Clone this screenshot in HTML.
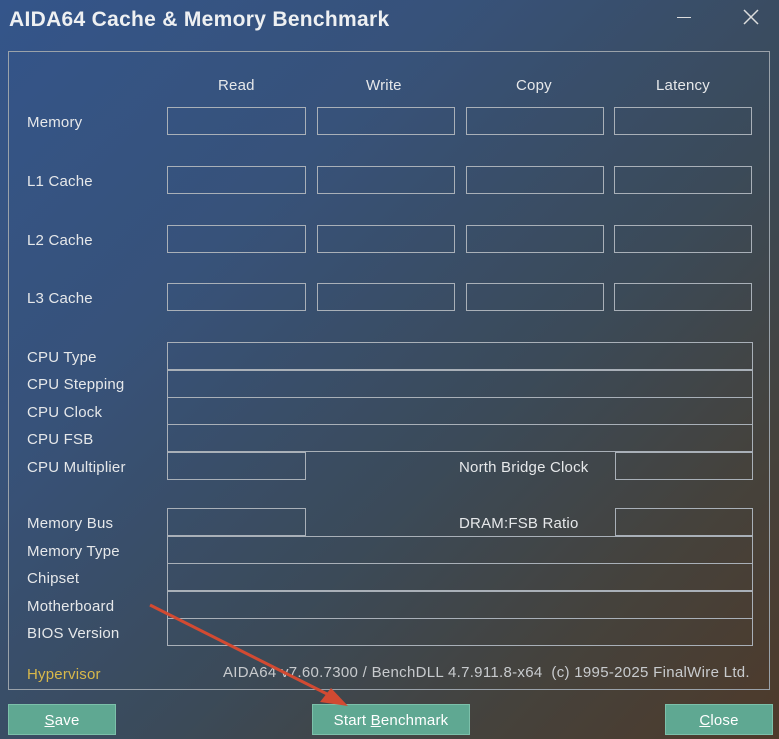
<html><head><style>
body{margin:0;width:779px;height:739px;overflow:hidden;font-family:"Liberation Sans",sans-serif;color:#e6e8ea;
background:linear-gradient(135deg,#34558a 0%,#37527a 30%,#3b4a58 60%,#45423c 80%,#4e3a2a 100%);position:relative}
.a{position:absolute}
.t{font-size:15px;white-space:nowrap;letter-spacing:0.2px;margin-top:1px}
.b{position:absolute;border:1px solid #a9b0b8;box-sizing:border-box;height:28px}
.btn{position:absolute;background:#5fa892;border:1px solid #7cc0aa;box-sizing:border-box;height:31px;top:704px;color:#fff;font-size:15px;text-align:center;line-height:31px;letter-spacing:0.2px}
</style></head><body>
<div class="a" style="left:9px;top:8px;font-size:21px;font-weight:bold;color:#eef0f2;letter-spacing:0.3px">AIDA64 Cache &amp; Memory Benchmark</div>
<div class="a" style="left:677px;top:17px;width:14px;height:1px;background:#ddd"></div>
<svg class="a" style="left:743px;top:9px" width="16" height="16"><path d="M1 1L15 15M15 1L1 15" stroke="#ddd" stroke-width="1.5"/></svg>
<div class="a" style="left:8px;top:51px;width:762px;height:639px;border:1px solid #9aa2aa;box-sizing:border-box"></div>
<div class="a t" style="left:218px;top:76px">Read</div>
<div class="a t" style="left:366px;top:76px">Write</div>
<div class="a t" style="left:516px;top:76px">Copy</div>
<div class="a t" style="left:656px;top:76px">Latency</div>
<div class="a t" style="left:27px;top:113px">Memory</div>
<div class="a t" style="left:27px;top:172px">L1 Cache</div>
<div class="a t" style="left:27px;top:231px">L2 Cache</div>
<div class="a t" style="left:27px;top:289px">L3 Cache</div>
<div class="b" style="left:167px;top:107px;width:139px"></div><div class="b" style="left:317px;top:107px;width:138px"></div><div class="b" style="left:466px;top:107px;width:138px"></div><div class="b" style="left:614px;top:107px;width:138px"></div>
<div class="b" style="left:167px;top:166px;width:139px"></div><div class="b" style="left:317px;top:166px;width:138px"></div><div class="b" style="left:466px;top:166px;width:138px"></div><div class="b" style="left:614px;top:166px;width:138px"></div>
<div class="b" style="left:167px;top:225px;width:139px"></div><div class="b" style="left:317px;top:225px;width:138px"></div><div class="b" style="left:466px;top:225px;width:138px"></div><div class="b" style="left:614px;top:225px;width:138px"></div>
<div class="b" style="left:167px;top:283px;width:139px"></div><div class="b" style="left:317px;top:283px;width:138px"></div><div class="b" style="left:466px;top:283px;width:138px"></div><div class="b" style="left:614px;top:283px;width:138px"></div>
<div class="a t" style="left:27px;top:348px">CPU Type</div>
<div class="a t" style="left:27px;top:375px">CPU Stepping</div>
<div class="a t" style="left:27px;top:403px">CPU Clock</div>
<div class="a t" style="left:27px;top:430px">CPU FSB</div>
<div class="a t" style="left:27px;top:458px">CPU Multiplier</div>
<div class="b" style="left:167px;top:342px;width:586px"></div>
<div class="b" style="left:167px;top:370px;width:586px"></div>
<div class="b" style="left:167px;top:397px;width:586px"></div>
<div class="b" style="left:167px;top:424px;width:586px"></div>
<div class="b" style="left:167px;top:452px;width:139px"></div>
<div class="a t" style="left:459px;top:458px">North Bridge Clock</div>
<div class="b" style="left:615px;top:452px;width:138px"></div>
<div class="a t" style="left:27px;top:514px">Memory Bus</div>
<div class="a t" style="left:27px;top:542px">Memory Type</div>
<div class="a t" style="left:27px;top:569px">Chipset</div>
<div class="a t" style="left:27px;top:597px">Motherboard</div>
<div class="a t" style="left:27px;top:624px">BIOS Version</div>
<div class="b" style="left:167px;top:508px;width:139px"></div>
<div class="a t" style="left:459px;top:514px">DRAM:FSB Ratio</div>
<div class="b" style="left:615px;top:508px;width:138px"></div>
<div class="b" style="left:167px;top:536px;width:586px"></div>
<div class="b" style="left:167px;top:563px;width:586px"></div>
<div class="b" style="left:167px;top:591px;width:586px"></div>
<div class="b" style="left:167px;top:618px;width:586px"></div>
<div class="a t" style="left:27px;top:665px;color:#d8b84a">Hypervisor</div>
<div class="a t" style="left:223px;top:663px;color:#c8cbce;letter-spacing:0.3px">AIDA64 v7.60.7300 / BenchDLL 4.7.911.8-x64&nbsp; (c) 1995-2025 FinalWire Ltd.</div>
<div class="btn" style="left:8px;width:108px"><u>S</u>ave</div>
<div class="btn" style="left:312px;width:158px">Start <u>B</u>enchmark</div>
<div class="btn" style="left:665px;width:108px"><u>C</u>lose</div>
<svg class="a" style="left:0;top:0" width="779" height="739"><line x1="150" y1="605" x2="335" y2="698" stroke="#d24a32" stroke-width="3"/><path d="M348 706L320 702L331 688Z" fill="#d24a32"/></svg>
</body></html>
